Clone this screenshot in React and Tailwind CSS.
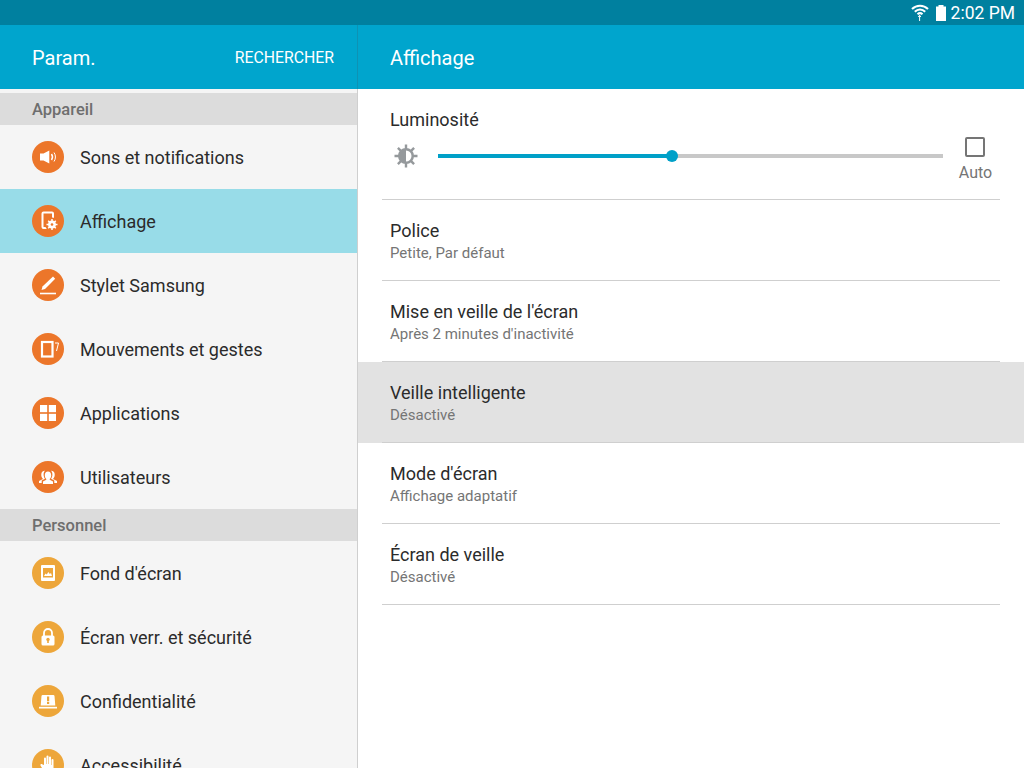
import { useState } from 'react'

const font = { fontFamily: 'Roboto' }

function Volume() {
  return (
    <svg viewBox="0 0 32 32" className="w-8 h-8">
      <path d="M8 12.500h3.500L17.300 9.500v13L11.500 19.500H8z" fill="#fff" />
      <path d="M19.500 13c1.200 1.800 1.200 4.200 0 6" stroke="#fff" strokeWidth="1.500" fill="none" />
      <path d="M22 11.500c1.900 2.700 1.900 6.300 0 9" stroke="#fff" strokeWidth="1" fill="none" />
    </svg>
  )
}

function Display() {
  return (
    <svg viewBox="0 0 32 32" className="w-8 h-8">
      <path d="M15 23H11.500a1 1 0 0 1-1-1V8.500a1 1 0 0 1 1-1h8.500a1 1 0 0 1 1 1V13" stroke="#fff" strokeWidth="2" fill="none" />
      <circle cx="20" cy="19.500" r="7" fill="#ec762a" />
      <path d="M20 14v11M14.500 19.500h11M16.200 15.700l7.600 7.600M23.800 15.700l-7.600 7.600" stroke="#fff" strokeWidth="1.500" />
      <circle cx="20" cy="19.500" r="3.900" fill="#fff" />
      <circle cx="20" cy="19.500" r="1.300" fill="#ec762a" />
    </svg>
  )
}

function Pen() {
  return (
    <svg viewBox="0 0 32 32" className="w-8 h-8">
      <path d="M9.500 21l1-3.500L21 7.500l2.200 2.200L13 20z" fill="#fff" />
      <path d="M8 24.500h16" stroke="#fff" strokeWidth="1.600" />
    </svg>
  )
}

function Motion() {
  return (
    <svg viewBox="0 0 32 32" className="w-8 h-8">
      <rect x="10" y="9" width="10.500" height="14.500" fill="none" stroke="#fff" strokeWidth="2.200" />
      <path d="M23 10h3.500L24.500 18" stroke="#fff" strokeWidth="1" fill="none" />
    </svg>
  )
}

function Grid() {
  return (
    <svg viewBox="0 0 32 32" className="w-8 h-8" fill="#fff">
      <rect x="8" y="8" width="7.200" height="7.200" />
      <rect x="16.800" y="8" width="7.200" height="7.200" />
      <rect x="8" y="16.800" width="7.200" height="7.200" />
      <rect x="16.800" y="16.800" width="7.200" height="7.200" />
    </svg>
  )
}

function Users() {
  return (
    <svg viewBox="0 0 32 32" className="w-8 h-8" fill="#fff">
      <path d="M7 22v-2l4-2c-1.500-1.500-2-3.500-1.600-5.500.4-2 2-3 3.600-2.800-1 1-1.500 2.500-1.400 4.300.1 1.500.6 2.800 1.400 3.700l-3.300 1.800V22z" />
      <path d="M25 22v-2l-4-2c1.500-1.500 2-3.500 1.600-5.500-.4-2-2-3-3.600-2.800 1 1 1.500 2.500 1.400 4.300-.1 1.500-.6 2.800-1.400 3.700l3.300 1.800V22z" />
      <path d="M16 10.500c2 0 3.200 1.500 3.200 3.700 0 1.600-.6 2.900-1.500 3.700v.9l3.300 1.700V23H11v-2.500l3.300-1.700v-.9c-.9-.8-1.500-2.100-1.500-3.700 0-2.200 1.200-3.700 3.200-3.700z" />
    </svg>
  )
}

function Wallpaper() {
  return (
    <svg viewBox="0 0 32 32" className="w-8 h-8">
      <rect x="9" y="8" width="14" height="16" rx="1" fill="#fff" />
      <rect x="11" y="11" width="10" height="9.500" fill="#eda63a" />
      <path d="M12 19l1.500-2.500 1.300 1 1.500-2.500 1.500 2 1.200-1 1 3z" fill="#fff" />
    </svg>
  )
}

function Lock() {
  return (
    <svg viewBox="0 0 32 32" className="w-8 h-8">
      <path d="M12 15v-3a4 4 0 0 1 8 0v3" stroke="#fff" strokeWidth="1.800" fill="none" />
      <rect x="9.500" y="14.500" width="13" height="10" rx="1.500" fill="#fff" />
      <circle cx="16" cy="18.500" r="1.700" fill="#eda63a" />
      <rect x="15.200" y="19" width="1.600" height="3" fill="#eda63a" />
    </svg>
  )
}

function Privacy() {
  return (
    <svg viewBox="0 0 32 32" className="w-8 h-8">
      <path d="M8.700 20.500l.8-9.500a1.200 1.200 0 0 1 1.200-1h10.600a1.200 1.200 0 0 1 1.200 1l.8 9.500z" fill="#fff" />
      <rect x="7" y="21.800" width="18" height="1.700" fill="#fff" />
      <rect x="15" y="11.500" width="2.200" height="4.800" fill="#eda63a" />
      <rect x="15" y="17" width="2.200" height="2" fill="#eda63a" />
    </svg>
  )
}

function Hand() {
  return (
    <svg viewBox="0 0 32 32" className="w-8 h-8" fill="#fff">
      <path d="M12 16V9.500a1 1 0 0 1 2 0V15h.5V7.500a1 1 0 0 1 2 0V15h.5V8.500a1 1 0 0 1 2 0V16h.5v-5a1 1 0 0 1 2 0v9c0 3-2 5-5 5s-4-1.500-5-3.500l-3-5c-.5-1 1-2 2-1z" />
    </svg>
  )
}

const ORANGE = 'bg-[#ec762a]'
const YELLOW = 'bg-[#eda63a]'

const menu = [
  { section: 'Appareil' },
  { label: 'Sons et notifications', icon: Volume, color: ORANGE },
  { label: 'Affichage', icon: Display, color: ORANGE, active: true },
  { label: 'Stylet Samsung', icon: Pen, color: ORANGE },
  { label: 'Mouvements et gestes', icon: Motion, color: ORANGE },
  { label: 'Applications', icon: Grid, color: ORANGE },
  { label: 'Utilisateurs', icon: Users, color: ORANGE },
  { section: 'Personnel' },
  { label: "Fond d'écran", icon: Wallpaper, color: YELLOW },
  { label: 'Écran verr. et sécurité', icon: Lock, color: YELLOW },
  { label: 'Confidentialité', icon: Privacy, color: YELLOW },
  { label: 'Accessibilité', icon: Hand, color: YELLOW },
]

const settings = [
  { title: 'Police', sub: 'Petite, Par défaut' },
  { title: "Mise en veille de l'écran", sub: "Après 2 minutes d'inactivité" },
  { title: 'Veille intelligente', sub: 'Désactivé', selected: true },
  { title: "Mode d'écran", sub: 'Affichage adaptatif' },
  { title: 'Écran de veille', sub: 'Désactivé' },
]

function MenuRow({ item }) {
  const Icon = item.icon
  return (
    <div className={`h-16 shrink-0 flex items-center pl-8 ${item.active ? 'bg-[#98dce8]' : ''}`}>
      <div className={`w-8 h-8 rounded-full ${item.color}`}>
        <Icon />
      </div>
      <span className="ml-4 text-[18px] text-[#2b2b2b]">{item.label}</span>
    </div>
  )
}

function SettingRow({ item }) {
  return (
    <div className={`h-[81px] px-6 ${item.selected ? 'bg-[#e2e2e2]' : ''}`}>
      <div className="h-full pt-[19px] px-2 border-b border-[#cfcfcf]">
        <p className="text-[18px] leading-[24px] text-[#2b2b2b]">{item.title}</p>
        <p className="text-[15px] leading-[20px] text-[#757575]">{item.sub}</p>
      </div>
    </div>
  )
}

export default function App() {
  const [brightness] = useState(46.300)

  return (
    <div className="w-[1024px] h-[768px] overflow-hidden flex flex-col bg-white" style={font}>
      {/* Status bar */}
      <div className="h-[25px] shrink-0 bg-[#00809f] flex items-center justify-end pr-[9px] text-white">
        <svg viewBox="0 0 20 20" className="w-5 h-5 -mt-[2px]">
          <path d="M2 7c4.500-4.500 11.500-4.500 16 0" stroke="#fff" strokeWidth="2" fill="none" />
          <path d="M4.800 9.800c3-3 7.400-3 10.400 0" stroke="#fff" strokeWidth="2" fill="none" />
          <path d="M7.500 12.300c1.500-1.400 3.500-1.400 5 0" stroke="#fff" strokeWidth="2" fill="none" />
          <path d="M8.300 15l1.300-1.800 1.300 1.800M9.600 13.500v5.500" stroke="#fff" strokeWidth="1" fill="none" />
        </svg>
        <svg viewBox="0 0 12 18" className="w-3 h-[18px] ml-[5px]">
          <path d="M3.500 1h5v1.500H11V17H1V2.500h2.500z" fill="#fff" />
        </svg>
        <span className="ml-1 mt-[2px] text-[17.500px] leading-none">2:02 PM</span>
      </div>

      {/* Action bar */}
      <div className="h-16 shrink-0 bg-[#00a5cd] flex text-white">
        <div className="w-[358px] shrink-0 flex items-center justify-between pt-0.5 pl-8 pr-[23px] border-r border-[#0e92b4]">
          <span className="text-[20px]">Param.</span>
          <span className="text-[15.800px]">RECHERCHER</span>
        </div>
        <div className="flex-1 flex items-center pt-0.5 pl-8">
          <span className="text-[20px]">Affichage</span>
        </div>
      </div>

      <div className="flex-1 flex min-h-0">
        {/* Category list */}
        <div className="w-[358px] shrink-0 bg-[#f5f5f5] border-r border-[#cfcfcf] pt-1 overflow-hidden flex flex-col">
          {menu.map((item) =>
            item.section ? (
              <div key={item.section} className="h-8 shrink-0 bg-[#dcdcdc] flex items-center pt-0.5 pl-8 text-[16.500px] font-medium text-[#6e6e6e]">
                {item.section}
              </div>
            ) : (
              <MenuRow key={item.label} item={item} />
            )
          )}
        </div>

        {/* Display settings */}
        <div className="flex-1 min-w-0 flex flex-col">
          <div className="h-[111px] shrink-0 mx-6 px-2 pt-[19px] border-b border-[#cfcfcf]">
            <p className="text-[18px] leading-[24px] text-[#2b2b2b]">Luminosité</p>
            <div className="flex items-start mt-[10px]">
              <svg viewBox="0 0 28 28" className="w-7 h-7 ml-[2px] shrink-0">
                <path d="M14 2.500v23M2.500 14h23M5.900 5.900l16.200 16.200M22.100 5.900L5.900 22.100" stroke="#95999c" strokeWidth="2.400" />
                <circle cx="14" cy="14" r="8" fill="#95999c" />
                <path d="M14 8.500a5.500 5.500 0 0 1 0 11z" fill="#fff" />
              </svg>
              <div className="relative flex-1 ml-[18px] mt-[12px] h-1 bg-[#c8c8c8]">
                <div className="h-1 bg-[#00a0c8]" style={{ width: `${brightness}%` }} />
                <div className="absolute top-[-4px] w-3 h-3 rounded-full bg-[#00a0c8]" style={{ left: `calc(${brightness}% - 6px)` }} />
              </div>
              <div className="w-[65px] shrink-0 -mr-4 flex flex-col items-center -mt-[5px]">
                <div className="w-5 h-5 mr-[1px] rounded-[2px] border-2 border-[#757575]" />
                <span className="text-[16px] leading-5 mt-[6px] text-[#757575]">Auto</span>
              </div>
            </div>
          </div>
          {settings.map((item) => (
            <SettingRow key={item.title} item={item} />
          ))}
        </div>
      </div>
    </div>
  )
}
